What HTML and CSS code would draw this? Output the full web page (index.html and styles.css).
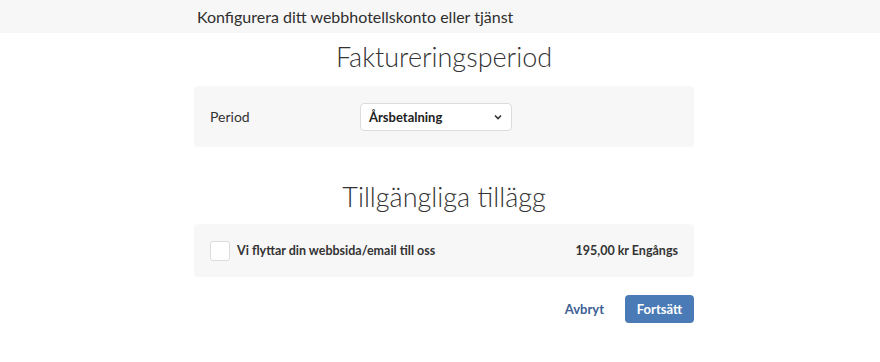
FILE: index.html
```html
<!DOCTYPE html>
<html lang="sv">
<head>
    <meta charset="UTF-8">
    <meta name="viewport" content="width=device-width, initial-scale=1.0">
    <title>Konfigurera</title>
    <link rel="stylesheet" href="styles.css">
</head>
<body>
    <div class="header-bar">
        <div class="page-title">Konfigurera ditt webbhotellskonto eller tjänst</div>
    </div>

    <div class="config-container">
        <h2 class="section-title">Faktureringsperiod</h2>
        <div class="panel period-panel">
            <label class="period-label" for="period">Period</label>
            <div class="select-box">
                <span class="select-value">Årsbetalning</span>
                <svg class="chevron" width="8" height="6" viewBox="0 0 8 6">
                    <path d="M1 1.5 L4 4.5 L7 1.5" fill="none" stroke="#333" stroke-width="1.6"/>
                </svg>
            </div>
        </div>

        <h2 class="section-title addons-title">Tillgängliga tillägg</h2>
        <div class="panel addon-panel">
            <div class="addon-left">
                <div class="checkbox"></div>
                <span class="addon-name">Vi flyttar din webbsida/email till oss</span>
            </div>
            <span class="addon-price">195,00 kr Engångs</span>
        </div>

        <div class="actions">
            <a class="cancel-link" href="#">Avbryt</a>
            <button class="continue-button">Fortsätt</button>
        </div>
    </div>
</body>
</html>
```

FILE: styles.css
```css
* {
    margin: 0;
    padding: 0;
    box-sizing: border-box;
    font-family: Lato, "Open Sans", sans-serif;
}

body {
    background-color: #fff;
    color: #333;
}

.header-bar {
    background-color: #f7f7f7;
    height: 33px;
    padding-left: 197px;
    display: flex;
    align-items: center;
}

.page-title {
    font-size: 16px;
    color: #2f2f2f;
}

.config-container {
    width: 500px;
    margin-left: 194px;
    display: flex;
    flex-direction: column;
}

.section-title {
    text-align: center;
    font-size: 27px;
    font-weight: 300;
    color: #333;
    margin-top: 4px;
    line-height: 40px;
    padding-bottom: 9px;
}

.addons-title {
    margin-top: 30px;
    padding-bottom: 7px;
}

.panel {
    background-color: #f7f7f7;
    border-radius: 4px;
    display: flex;
    align-items: center;
}

.period-panel {
    height: 61px;
    padding-left: 16px;
}

.period-label {
    font-size: 14px;
    width: 150px;
}

.select-box {
    width: 152px;
    height: 28px;
    background-color: #fff;
    border: 1px solid #dcdcdc;
    border-radius: 4px;
    display: flex;
    align-items: center;
    justify-content: space-between;
    padding: 0 9px 0 8px;
}

.select-value {
    font-size: 13px;
    font-weight: 700;
    color: #222;
}

.addon-panel {
    height: 53px;
    padding: 0 16px;
    justify-content: space-between;
}

.addon-left {
    display: flex;
    align-items: center;
    gap: 7px;
}

.checkbox {
    width: 20px;
    height: 20px;
    background-color: #fff;
    border: 1px solid #dcdcdc;
    border-radius: 3px;
}

.addon-name, .addon-price {
    font-size: 12.5px;
    font-weight: 700;
    color: #333;
}

.actions {
    display: flex;
    justify-content: flex-end;
    align-items: center;
    gap: 21px;
    margin-top: 18px;
}

.cancel-link {
    color: #3d6196;
    font-size: 13px;
    font-weight: 700;
    text-decoration: none;
}

.continue-button {
    background-color: #4a7bb7;
    color: #fff;
    border: none;
    border-radius: 4px;
    height: 28px;
    width: 69px;
    font-size: 13px;
    font-weight: 700;
}
```
